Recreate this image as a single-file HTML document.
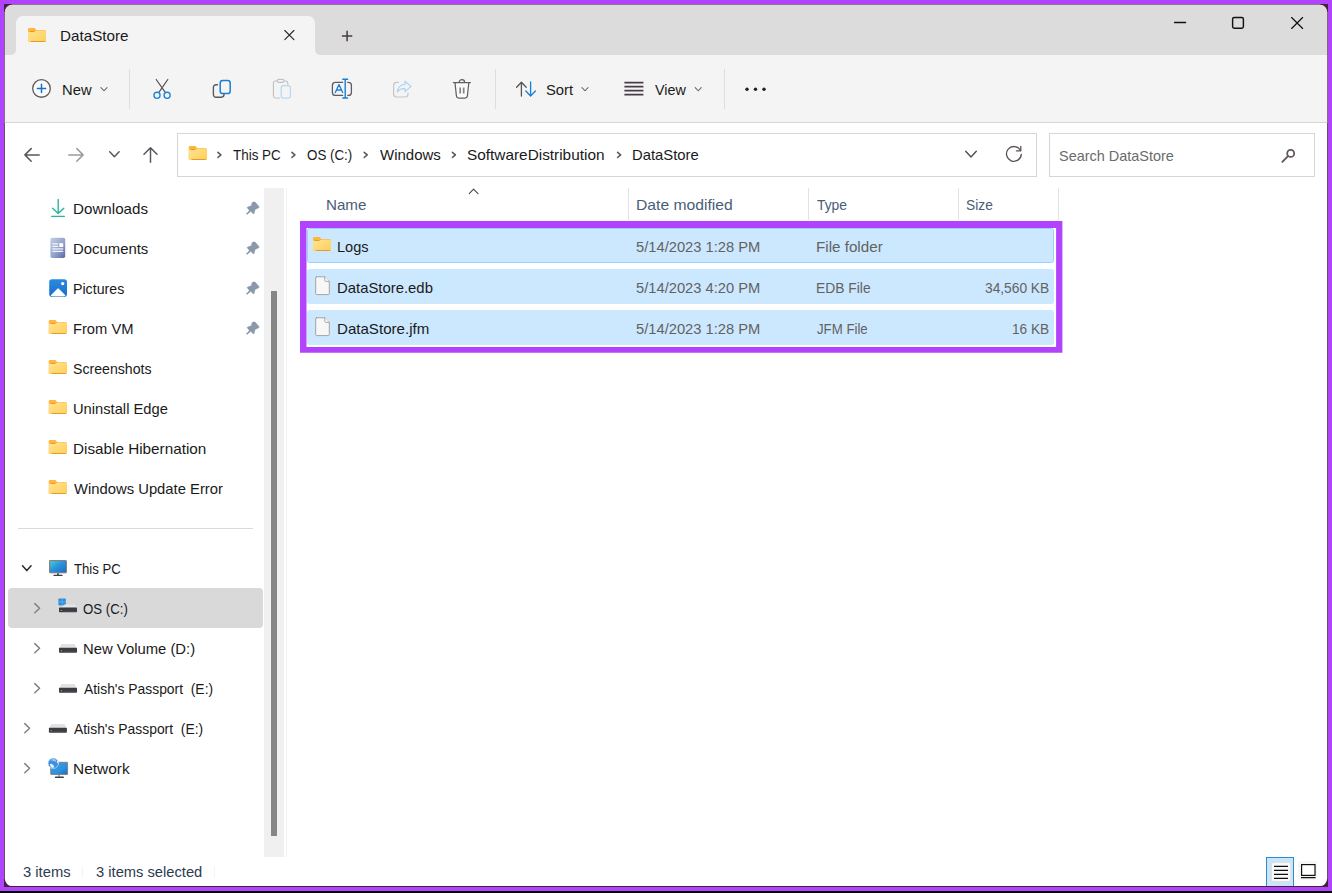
<!DOCTYPE html>
<html lang="en">
<head>
<meta charset="utf-8">
<title>DataStore</title>
<style>
*{box-sizing:border-box;margin:0;padding:0}
html,body{width:1332px;height:893px;overflow:hidden;background:#000}
body{font-family:"Liberation Sans",sans-serif;font-size:15px;color:#1a1a1a;position:relative}
#frame{position:absolute;left:0;top:0;width:1332px;height:891px;background:#b243fc}
#corner{position:absolute;left:4px;top:4px;width:1324px;height:882.8px;background:#45203f}
#ui{position:absolute;left:0;top:0;width:1332px;height:893px;background:#fff;clip-path:inset(4.8px 4.8px 6.9px 4.8px round 7.5px)}
.b{position:absolute}
.t{position:absolute;white-space:pre;line-height:20px;height:20px;font-size:15px;transform-origin:0 0}
svg{position:absolute;overflow:visible}
.vs{position:absolute;width:1px;background:#dedede}
.row{position:absolute;left:306.9px;width:746.9px;height:34.8px;background:#cce8ff;border-radius:2.5px}
</style>
</head>
<body>
<div id="frame"></div>
<div id="corner"></div>
<div id="ui">
<!-- title bar -->
<div class="b" style="left:0;top:0;width:1332px;height:55px;background:#dcdcdc"></div>
<!-- tab -->
<div class="b" style="left:16px;top:15.8px;width:299.4px;height:40px;background:#f4f4f4;border-radius:7px 7px 0 0"></div>
<svg style="left:11px;top:50px" width="5" height="5" viewBox="0 0 8 8"><path d="M8 0V8H0A8 8 0 0 0 8 0Z" fill="#f4f4f4"/></svg>
<svg style="left:315.4px;top:50px" width="5" height="5" viewBox="0 0 8 8"><path d="M0 0V8H8A8 8 0 0 1 0 0Z" fill="#f4f4f4"/></svg>
<!-- toolbar -->
<div class="b" style="left:0;top:55px;width:1332px;height:68px;background:#f4f4f4;border-bottom:1px solid #d6d6d6"></div>
<div class="vs" style="left:129px;top:69px;height:40px"></div>
<div class="vs" style="left:495px;top:69px;height:40px"></div>
<div class="vs" style="left:724px;top:69px;height:40px"></div>
<!-- address bar -->
<div class="b" style="left:177px;top:133px;width:860px;height:44px;border:1px solid #d6d6d6;background:#fff"></div>
<div class="b" style="left:1049px;top:133px;width:266px;height:44px;border:1px solid #d6d6d6;background:#fff"></div>
<!-- sidebar scrollbar -->
<div class="b" style="left:264px;top:188px;width:20px;height:669px;background:#f0f0f0"></div>
<div class="b" style="left:271px;top:291px;width:6px;height:545px;background:#868686"></div>
<div class="b" style="left:286px;top:188px;width:1px;height:669px;background:#f3f3f3"></div>
<!-- sidebar separator + selection -->
<div class="b" style="left:18px;top:528px;width:235px;height:1px;background:#dadada"></div>
<div class="b" style="left:8px;top:588px;width:255px;height:40px;background:#d9d9d9;border-radius:4px"></div>
<!-- list header separators -->
<div class="vs" style="left:628px;top:188px;height:32px;background:#e3e3e3"></div>
<div class="vs" style="left:808px;top:188px;height:32px;background:#e3e3e3"></div>
<div class="vs" style="left:958px;top:188px;height:32px;background:#e3e3e3"></div>
<div class="vs" style="left:1058px;top:188px;height:32px;background:#e3e3e3"></div>
<!-- rows -->
<div class="row" style="top:227.9px;border:1px solid #99d1ff"></div>
<div class="row" style="top:269.1px"></div>
<div class="row" style="top:310.1px"></div>
<!-- purple highlight box -->
<!-- status bar -->
<div class="vs" style="left:82px;top:866px;height:12px;background:#f4f4f4"></div>
<div class="vs" style="left:214px;top:866px;height:12px;background:#f4f4f4"></div>
<div class="b" style="left:1266px;top:857px;width:28px;height:30px;background:#cce4f7;border:1px solid #2a8dd4"></div>
<div class="b" style="left:1298px;top:861px;width:19px;height:19px;background:#f6f6f6;border-radius:2px"></div>
<svg style="left:0;top:0" width="1332" height="893" viewBox="0 0 1332 893" fill="none" stroke-linecap="round" stroke-linejoin="round">
<defs><linearGradient id="gf" x1="0" y1="0" x2="1" y2="1"><stop offset="0" stop-color="#ffe394"/><stop offset="1" stop-color="#ffcf55"/></linearGradient><linearGradient id="gm" x1="0" y1="0" x2="1" y2="1"><stop offset="0" stop-color="#49d3c6"/><stop offset=".45" stop-color="#2b93de"/><stop offset="1" stop-color="#1a6ac4"/></linearGradient><linearGradient id="gd" x1="0" y1="0" x2="1" y2="1"><stop offset="0" stop-color="#c0d0e6"/><stop offset=".55" stop-color="#93a3cc"/><stop offset="1" stop-color="#5867ab"/></linearGradient><linearGradient id="gp" x1="0" y1="0" x2="0" y2="1"><stop offset="0" stop-color="#2a8ae0"/><stop offset="1" stop-color="#1c6fcb"/></linearGradient><linearGradient id="gm2" x1="0" y1="0" x2="1" y2="1"><stop offset="0" stop-color="#3aa0e4"/><stop offset=".6" stop-color="#2e93de"/><stop offset="1" stop-color="#1a69c4"/></linearGradient></defs>
<path fill-rule="evenodd" stroke="none" fill="#b243fc" d="M300 221.1H1062.4V352.8H300ZM306.5 227.9V347.1H1056.1V227.9Z"/>
<g transform="translate(28 28)" stroke="none"><path d="M0 1.1A1.1 1.1 0 0 1 1.1 0H6.7L8.5 2.2H16.9A1.1 1.1 0 0 1 18 3.3V12.9A1.1 1.1 0 0 1 16.9 14H1.1A1.1 1.1 0 0 1 0 12.9Z" fill="#ffb63a"/><path d="M0 4.6A.8.800 0 0 1 .8 3.8H6.2L7.9 2.9H17.2A.8.800 0 0 1 18 3.7V12.9A1.1 1.1 0 0 1 16.9 14H1.1A1.1 1.1 0 0 1 0 12.9Z" fill="url(#gf)"/><rect x="1.8" y="3.1" width="4.6" height=".8" fill="#d9912a"/><rect x="2.6" y="13.1" width="14.4" height=".9" rx=".4" fill="#e39a30"/></g>
<path d="M284.8 30.5L293.9 39.6M293.9 30.5L284.8 39.6" stroke="#2b2b2b" stroke-width="1.15"/>
<path d="M347.1 30.8V41.3M341.9 36H352.3" stroke="#453c46" stroke-width="1.5" stroke-linecap="butt"/>
<path d="M1174.6 22.5H1185.6" stroke="#111" stroke-width="1.4"/>
<rect x="1232.6" y="17.5" width="10.8" height="10.7" rx="1.7" stroke="#111" stroke-width="1.45"/>
<path d="M1291.6 17.5L1302.6 28.5M1302.6 17.5L1291.6 28.5" stroke="#111" stroke-width="1.15"/>
<circle cx="41.5" cy="88.45" r="8.8" fill="#fafafa" stroke="#5a5a5a" stroke-width="1.3"/>
<path d="M37.4 88.4H45.6M41.5 84.3V92.5" stroke="#1474cc" stroke-width="1.5"/>
<path d="M101.0 87.65L104 90.75L107.0 87.65" stroke="#6a6068" stroke-width="1.05"/>
<path d="M156.2 79.5L165.3 92.3M167.8 79.5L158.9 92.3" stroke="#57535c" stroke-width="1.25"/>
<circle cx="157" cy="95.3" r="3.05" stroke="#1f84d8" stroke-width="1.35"/><circle cx="167.1" cy="95.3" r="3.05" stroke="#1f84d8" stroke-width="1.35"/>
<path d="M217.5 84.8H216A2.6 2.6 0 0 0 213.4 87.4V94.6A2.6 2.6 0 0 0 216 97.2H221.4A2.6 2.6 0 0 0 224 94.6V94.2" stroke="#5a5a5a" stroke-width="1.4"/>
<rect x="220.2" y="80.6" width="10" height="13" rx="2.6" stroke="#1a7fd4" stroke-width="1.5"/>
<path d="M279.6 98H275.6A2.2 2.2 0 0 1 273.4 95.800V83.2A2.200 2.200 0 0 1 275.600 81H277.200M284 81H285.600A2.200 2.200 0 0 1 287.800 83.200V84.200" stroke="#c2c2c4" stroke-width="1.15"/>
<rect x="277.2" y="79.4" width="6.8" height="3" rx="1.5" stroke="#c2c2c4" stroke-width="1.1"/>
<rect x="281.2" y="85.600" width="9.200" height="12.600" rx="2.2" stroke="#b3d8f3" stroke-width="1.2"/>
<path d="M342.6 82.400H335.400A3 3 0 0 0 332.400 85.400V92.400A3 3 0 0 0 335.400 95.400H342.600M347.800 82.400H348.400A3 3 0 0 1 351.400 85.400V92.400A3 3 0 0 1 348.400 95.400H347.800" stroke="#5f5a64" stroke-width="1.3"/>
<path d="M345.200 79.300V98M342.800 79.300H347.600M342.800 98H347.600" stroke="#1a7fd4" stroke-width="1.4"/>
<path d="M335.300 92.600L339 84.500L342.700 92.600M336.600 90H341.400" stroke="#1a7fd4" stroke-width="1.3"/>
<path d="M398.400 82.400H396.600A3 3 0 0 0 393.600 85.400V94A3 3 0 0 0 396.600 97H405A3 3 0 0 0 408 94V93.200" stroke="#c6c6c6" stroke-width="1.2"/>
<path d="M405 81.200L411 86.400L405 91.600V88.600C401.500 88.400 399 89.600 397.400 92C397.800 87.600 400.400 84.600 405 84.200Z" stroke="#a9d3f1" stroke-width="1.15"/>
<path d="M455 83L456.400 95.800A2.400 2.400 0 0 0 458.800 98H465A2.400 2.400 0 0 0 467.400 95.800L468.800 83Z" fill="#fafafa" stroke="none"/>
<path d="M453.400 82.500H470.400M459.200 82.300A2.700 2.700 0 0 1 464.600 82.300M455 82.800L456.400 95.800A2.400 2.400 0 0 0 458.800 98H465A2.400 2.400 0 0 0 467.400 95.800L468.800 82.800" stroke="#606064" stroke-width="1.25"/>
<path d="M460.200 87.400V93.400M463.700 87.400V93.400" stroke="#858588" stroke-width="1.7" stroke-linecap="butt"/>
<path d="M521.400 96V82.400M516.600 87.200L521.400 82.200L526.200 87.200" stroke="#555" stroke-width="1.3"/>
<path d="M530.600 82V95.800M525.800 91L530.600 96L535.400 91" stroke="#1a7fd4" stroke-width="1.3"/>
<path d="M582.0 87.65L585 90.75L588.0 87.65" stroke="#6a6068" stroke-width="1.05"/>
<path d="M624.400 82.6H643.400" stroke="#463c46" stroke-width="1.6" stroke-linecap="butt"/>
<path d="M624.400 86.6H643.400" stroke="#463c46" stroke-width="1.6" stroke-linecap="butt"/>
<path d="M624.400 90.6H643.400" stroke="#463c46" stroke-width="1.6" stroke-linecap="butt"/>
<path d="M624.400 94.6H643.400" stroke="#463c46" stroke-width="1.6" stroke-linecap="butt"/>
<path d="M695.2 87.65L698.2 90.75L701.2 87.65" stroke="#6a6068" stroke-width="1.05"/>
<circle cx="747" cy="89.300" r="1.7" fill="#1f1f1f" stroke="none"/>
<circle cx="755.5" cy="89.300" r="1.7" fill="#1f1f1f" stroke="none"/>
<circle cx="764" cy="89.300" r="1.7" fill="#1f1f1f" stroke="none"/>
<path d="M39.200 154.900H25M31.200 148.600L24.900 154.900L31.200 161.200" stroke="#55585c" stroke-width="1.5"/>
<path d="M68.800 154.900H83M76.800 148.600L83.100 154.900L76.800 161.200" stroke="#9b9b9b" stroke-width="1.5"/>
<path d="M109.7 151.7L114.4 156.7L119.10000000000001 151.7" stroke="#55585c" stroke-width="1.5"/>
<path d="M150.500 162.200V147.800M144 154.200L150.500 147.700L157 154.200" stroke="#55585c" stroke-width="1.5"/>
<g transform="translate(188.8 146)" stroke="none"><path d="M0 1.1A1.1 1.1 0 0 1 1.1 0H6.7L8.5 2.2H16.9A1.1 1.1 0 0 1 18 3.3V12.9A1.1 1.1 0 0 1 16.9 14H1.1A1.1 1.1 0 0 1 0 12.9Z" fill="#ffb63a"/><path d="M0 4.6A.8.800 0 0 1 .8 3.8H6.2L7.9 2.9H17.2A.8.800 0 0 1 18 3.7V12.9A1.1 1.1 0 0 1 16.9 14H1.1A1.1 1.1 0 0 1 0 12.9Z" fill="url(#gf)"/><rect x="1.8" y="3.1" width="4.6" height=".8" fill="#d9912a"/><rect x="2.6" y="13.1" width="14.4" height=".9" rx=".4" fill="#e39a30"/></g>
<path d="M217.90 152.30L220.90 154.9L217.90 157.50" stroke="#5a5a5e" stroke-width="1.55"/>
<path d="M291.90 152.30L294.90 154.9L291.90 157.50" stroke="#5a5a5e" stroke-width="1.55"/>
<path d="M364.20 152.30L367.20 154.9L364.20 157.50" stroke="#5a5a5e" stroke-width="1.55"/>
<path d="M452.40 152.30L455.40 154.9L452.40 157.50" stroke="#5a5a5e" stroke-width="1.55"/>
<path d="M617.60 152.30L620.60 154.9L617.60 157.50" stroke="#5a5a5e" stroke-width="1.55"/>
<path d="M965.7 151.29999999999998L971 156.9L976.3 151.29999999999998" stroke="#4e5258" stroke-width="1.45"/>
<path d="M1020.2 150A7.400 7.400 0 1 0 1021.300 154.400" stroke="#5c5058" stroke-width="1.3"/>
<path d="M1020.800 146.400V150.800H1016.400" stroke="#5c5058" stroke-width="1.3"/>
<circle cx="1290.700" cy="153.400" r="3.500" stroke="#65555f" stroke-width="1.800"/><path d="M1288 156.200L1282.400 161.800" stroke="#65555f" stroke-width="1.900"/>
<path d="M58.200 199.400V213.200M52.600 208.200L58.200 213.600L63.800 208.200" stroke="#2bb5a0" stroke-width="1.4"/>
<path d="M51.600 216.300H64.400" stroke="#2bb5a0" stroke-width="1.3"/>
<rect x="50.400" y="237.800" width="14.800" height="20.200" rx="1.800" fill="url(#gd)" stroke="none"/>
<g stroke="none" fill="#fff"><rect x="52.400" y="243.300" width="5.800" height="1.100"/><rect x="52.400" y="245.800" width="5.800" height="1.100"/><rect x="59.300" y="243.200" width="3.900" height="3.800"/><rect x="52.400" y="248.400" width="10.800" height="1.100"/><rect x="52.400" y="250.800" width="10.800" height="1.100"/></g>
<rect x="49.200" y="279.200" width="17.800" height="17.500" rx="2.800" fill="url(#gp)" stroke="none"/>
<circle cx="62.700" cy="283.600" r="1.600" fill="#fff" stroke="none"/>
<path d="M50.600 295.400L57.600 288.600Q58.100 288.200 58.600 288.600L65.600 295.400Q64.600 296.200 63.800 296.200H52.400Q51.400 296.200 50.600 295.400Z" fill="#fff" stroke="none"/>
<g transform="translate(48.8 320)" stroke="none"><path d="M0 1.1A1.1 1.1 0 0 1 1.1 0H6.7L8.5 2.2H16.9A1.1 1.1 0 0 1 18 3.3V12.9A1.1 1.1 0 0 1 16.9 14H1.1A1.1 1.1 0 0 1 0 12.9Z" fill="#ffb63a"/><path d="M0 4.6A.8.800 0 0 1 .8 3.8H6.2L7.9 2.9H17.2A.8.800 0 0 1 18 3.7V12.9A1.1 1.1 0 0 1 16.9 14H1.1A1.1 1.1 0 0 1 0 12.9Z" fill="url(#gf)"/><rect x="1.8" y="3.1" width="4.6" height=".8" fill="#d9912a"/><rect x="2.6" y="13.1" width="14.4" height=".9" rx=".4" fill="#e39a30"/></g>
<g transform="translate(48.8 360)" stroke="none"><path d="M0 1.1A1.1 1.1 0 0 1 1.1 0H6.7L8.5 2.2H16.9A1.1 1.1 0 0 1 18 3.3V12.9A1.1 1.1 0 0 1 16.9 14H1.1A1.1 1.1 0 0 1 0 12.9Z" fill="#ffb63a"/><path d="M0 4.6A.8.800 0 0 1 .8 3.8H6.2L7.9 2.9H17.2A.8.800 0 0 1 18 3.7V12.9A1.1 1.1 0 0 1 16.9 14H1.1A1.1 1.1 0 0 1 0 12.9Z" fill="url(#gf)"/><rect x="1.8" y="3.1" width="4.6" height=".8" fill="#d9912a"/><rect x="2.6" y="13.1" width="14.4" height=".9" rx=".4" fill="#e39a30"/></g>
<g transform="translate(48.8 400)" stroke="none"><path d="M0 1.1A1.1 1.1 0 0 1 1.1 0H6.7L8.5 2.2H16.9A1.1 1.1 0 0 1 18 3.3V12.9A1.1 1.1 0 0 1 16.9 14H1.1A1.1 1.1 0 0 1 0 12.9Z" fill="#ffb63a"/><path d="M0 4.6A.8.800 0 0 1 .8 3.8H6.2L7.9 2.9H17.2A.8.800 0 0 1 18 3.7V12.9A1.1 1.1 0 0 1 16.9 14H1.1A1.1 1.1 0 0 1 0 12.9Z" fill="url(#gf)"/><rect x="1.8" y="3.1" width="4.6" height=".8" fill="#d9912a"/><rect x="2.6" y="13.1" width="14.4" height=".9" rx=".4" fill="#e39a30"/></g>
<g transform="translate(48.8 440)" stroke="none"><path d="M0 1.1A1.1 1.1 0 0 1 1.1 0H6.7L8.5 2.2H16.9A1.1 1.1 0 0 1 18 3.3V12.9A1.1 1.1 0 0 1 16.9 14H1.1A1.1 1.1 0 0 1 0 12.9Z" fill="#ffb63a"/><path d="M0 4.6A.8.800 0 0 1 .8 3.8H6.2L7.9 2.9H17.2A.8.800 0 0 1 18 3.7V12.9A1.1 1.1 0 0 1 16.9 14H1.1A1.1 1.1 0 0 1 0 12.9Z" fill="url(#gf)"/><rect x="1.8" y="3.1" width="4.6" height=".8" fill="#d9912a"/><rect x="2.6" y="13.1" width="14.4" height=".9" rx=".4" fill="#e39a30"/></g>
<g transform="translate(48.8 480)" stroke="none"><path d="M0 1.1A1.1 1.1 0 0 1 1.1 0H6.7L8.5 2.2H16.9A1.1 1.1 0 0 1 18 3.3V12.9A1.1 1.1 0 0 1 16.9 14H1.1A1.1 1.1 0 0 1 0 12.9Z" fill="#ffb63a"/><path d="M0 4.6A.8.800 0 0 1 .8 3.8H6.2L7.9 2.9H17.2A.8.800 0 0 1 18 3.7V12.9A1.1 1.1 0 0 1 16.9 14H1.1A1.1 1.1 0 0 1 0 12.9Z" fill="url(#gf)"/><rect x="1.8" y="3.1" width="4.6" height=".8" fill="#d9912a"/><rect x="2.6" y="13.1" width="14.4" height=".9" rx=".4" fill="#e39a30"/></g>
<polygon transform="translate(246 201)" points="6.9,1.05 9.05,1.05 13.1,5.75 12.8,6.8 9.05,8.4 8,12.7 7.2,12.7 4.75,10.3 1,13.5 0.3,13 3.4,9.5 1.25,6.8 1.25,6.15 5.3,4.7 6.1,2" fill="#8999ab" stroke="#8999ab" stroke-width=".5"/>
<polygon transform="translate(246 241)" points="6.9,1.05 9.05,1.05 13.1,5.75 12.8,6.8 9.05,8.4 8,12.7 7.2,12.7 4.75,10.3 1,13.5 0.3,13 3.4,9.5 1.25,6.8 1.25,6.15 5.3,4.7 6.1,2" fill="#8999ab" stroke="#8999ab" stroke-width=".5"/>
<polygon transform="translate(246 281)" points="6.9,1.05 9.05,1.05 13.1,5.75 12.8,6.8 9.05,8.4 8,12.7 7.2,12.7 4.75,10.3 1,13.5 0.3,13 3.4,9.5 1.25,6.8 1.25,6.15 5.3,4.7 6.1,2" fill="#8999ab" stroke="#8999ab" stroke-width=".5"/>
<polygon transform="translate(246 321)" points="6.9,1.05 9.05,1.05 13.1,5.75 12.8,6.8 9.05,8.4 8,12.7 7.2,12.7 4.75,10.3 1,13.5 0.3,13 3.4,9.5 1.25,6.8 1.25,6.15 5.3,4.7 6.1,2" fill="#8999ab" stroke="#8999ab" stroke-width=".5"/>
<path d="M22.5 565.8000000000001L26.8 570.6L31.1 565.8000000000001" stroke="#2a2a2a" stroke-width="1.5"/>
<rect x="49.600" y="560.600" width="16.800" height="12.200" rx=".5" fill="url(#gm)" stroke="#84767a" stroke-width="1"/>
<rect x="57" y="573.200" width="2" height="1.800" fill="#5a646c" stroke="none"/><rect x="53.400" y="574.800" width="9.200" height="1.300" rx=".6" fill="#36424c" stroke="none"/>
<path d="M34.808 603.6L39.592000000000006 608.2L34.808 612.8000000000001" stroke="#828282" stroke-width="1.5"/>
<rect x="58.400" y="598.400" width="7.400" height="7" rx=".8" fill="#2b8fde" stroke="none"/><path d="M62.100 598.400V605.400M58.400 601.900H65.800" stroke="#79bdf0" stroke-width=".6"/>
<path d="M64.500 604.500H74.800L76.700 607.600H61Z" fill="#e6e6e6" stroke="none"/>
<rect x="59" y="607.400" width="18" height="4.900" rx=".7" fill="#3b3d42" stroke="none"/><rect x="60.600" y="610" width="1.600" height=".9" fill="#9a9a9a" stroke="none"/><rect x="64" y="611" width="11.500" height=".6" fill="#5a4a58" stroke="none"/>
<path d="M34.808 643.6L39.592000000000006 648.2L34.808 652.8000000000001" stroke="#828282" stroke-width="1.5"/>
<g transform="translate(59 644.1)" stroke="none"><path d="M2.4 0H15.600L17.700 3.800H.3Z" fill="#e2e2e2"/><rect x="0" y="3.700" width="18" height="4.900" rx=".8" fill="#3b3d42"/><rect x="1.600" y="6.300" width="1.600" height=".9" fill="#9a9a9a"/><rect x="5" y="7.300" width="11.500" height=".6" fill="#5a4a58"/></g>
<path d="M34.808 683.6L39.592000000000006 688.2L34.808 692.8000000000001" stroke="#828282" stroke-width="1.5"/>
<g transform="translate(59 684.1)" stroke="none"><path d="M2.4 0H15.600L17.700 3.800H.3Z" fill="#e2e2e2"/><rect x="0" y="3.700" width="18" height="4.900" rx=".8" fill="#3b3d42"/><rect x="1.600" y="6.300" width="1.600" height=".9" fill="#9a9a9a"/><rect x="5" y="7.300" width="11.500" height=".6" fill="#5a4a58"/></g>
<path d="M24.808 723.6L29.592 728.2L24.808 732.8000000000001" stroke="#828282" stroke-width="1.5"/>
<g transform="translate(48.9 724.1)" stroke="none"><path d="M2.4 0H15.600L17.700 3.800H.3Z" fill="#e2e2e2"/><rect x="0" y="3.700" width="18" height="4.900" rx=".8" fill="#3b3d42"/><rect x="1.600" y="6.300" width="1.600" height=".9" fill="#9a9a9a"/><rect x="5" y="7.300" width="11.500" height=".6" fill="#5a4a58"/></g>
<path d="M24.808 763.6L29.592 768.2L24.808 772.8000000000001" stroke="#828282" stroke-width="1.5"/>
<rect x="50.700" y="762.300" width="16.900" height="12.200" rx=".5" fill="url(#gm2)" stroke="#8a7c7a" stroke-width=".9"/>
<rect x="58.300" y="774.900" width="1.500" height="1.900" fill="#8a8f94" stroke="none"/><rect x="54.900" y="776.600" width="9" height="1.400" rx=".6" fill="#36424c" stroke="none"/>
<circle cx="53.300" cy="763.300" r="5.200" fill="#3f8fe0" stroke="#cfe2f5" stroke-width=".7"/>
<path d="M49.800 764.200Q51.500 762.800 53.600 765.600Q55 767.400 52.800 767.900Q50.200 767.200 49.800 764.200Z" fill="#e6f1fb" stroke="none"/>
<path d="M50.400 760.200Q52.800 758.400 55.600 759.400Q56.800 761 55.400 761.800Q53 760.200 50.400 760.200Z" fill="#9cc9f3" stroke="none"/>
<circle cx="57.700" cy="762" r="1" fill="#dcebf9" stroke="none"/>
<path d="M469.200 193.600L473.600 189.200L478 193.600" stroke="#4a4a4a" stroke-width="1.15"/>
<g transform="translate(313 237)" stroke="none"><path d="M0 1.1A1.1 1.1 0 0 1 1.1 0H6.7L8.5 2.2H16.9A1.1 1.1 0 0 1 18 3.3V12.9A1.1 1.1 0 0 1 16.9 14H1.1A1.1 1.1 0 0 1 0 12.9Z" fill="#ffb63a"/><path d="M0 4.6A.8.800 0 0 1 .8 3.8H6.2L7.9 2.9H17.2A.8.800 0 0 1 18 3.7V12.9A1.1 1.1 0 0 1 16.9 14H1.1A1.1 1.1 0 0 1 0 12.9Z" fill="url(#gf)"/><rect x="1.8" y="3.1" width="4.6" height=".8" fill="#d9912a"/><rect x="2.6" y="13.1" width="14.4" height=".9" rx=".4" fill="#e39a30"/></g>
<g transform="translate(315.2 276.3)"><path d="M1.2 .5H9.6L14.1 5V17.4A.9.900 0 0 1 13.2 18.3H1.4A.9.900 0 0 1 .5 17.4V1.2A.7.700 0 0 1 1.2 .5Z" fill="#f7f7f7" stroke="#9c9c9c" stroke-width=".9"/><path d="M9.6 .5V4.2A.8.800 0 0 0 10.4 5H14.1" fill="#fdfdfd" stroke="#9c9c9c" stroke-width=".9"/></g>
<g transform="translate(315.2 317.3)"><path d="M1.2 .5H9.6L14.1 5V17.4A.9.900 0 0 1 13.2 18.3H1.4A.9.900 0 0 1 .5 17.4V1.2A.7.700 0 0 1 1.2 .5Z" fill="#f7f7f7" stroke="#9c9c9c" stroke-width=".9"/><path d="M9.6 .5V4.2A.8.800 0 0 0 10.4 5H14.1" fill="#fdfdfd" stroke="#9c9c9c" stroke-width=".9"/></g>
<rect x="1271.4" y="862.4" width="19.4" height="19.2" rx="2.5" fill="#f7f9fb" stroke="#dcdcdc" stroke-width="1" stroke-dasharray="1 1"/>
<path d="M1274 866.4H1288" stroke="#111" stroke-width="1.100" stroke-linecap="butt"/>
<path d="M1274 870.4H1288" stroke="#111" stroke-width="1.100" stroke-linecap="butt"/>
<path d="M1274 874.4H1288" stroke="#111" stroke-width="1.100" stroke-linecap="butt"/>
<path d="M1274 878.4H1288" stroke="#111" stroke-width="1.100" stroke-linecap="butt"/>
<rect x="1301.600" y="864.600" width="13.400" height="10.800" fill="#fff" stroke="#111" stroke-width="1.200" stroke-linejoin="miter"/><path d="M1301 877.600H1315.600" stroke="#111" stroke-width="1.100" stroke-linecap="butt"/>
</svg>
<div class="t" style="left:60.32px;top:25.6px;color:#1a1a1a;transform:scaleX(1.0146)">DataStore</div>
<div class="t" style="left:62.16px;top:79.6px;color:#1a1a1a;transform:scaleX(0.9867)">New</div>
<div class="t" style="left:546.43px;top:79.6px;color:#1a1a1a;transform:scaleX(0.9849)">Sort</div>
<div class="t" style="left:654.91px;top:79.6px;color:#1a1a1a;transform:scaleX(0.9575)">View</div>
<div class="t" style="left:233.48px;top:145.3px;color:#1a1a1a;transform:scaleX(0.8953)">This PC</div>
<div class="t" style="left:307.28px;top:145.3px;color:#1a1a1a;transform:scaleX(0.8902)">OS (C:)</div>
<div class="t" style="left:379.54px;top:145.3px;color:#1a1a1a;transform:scaleX(0.9987)">Windows</div>
<div class="t" style="left:467.00px;top:145.3px;color:#1a1a1a;transform:scaleX(1.0243)">SoftwareDistribution</div>
<div class="t" style="left:631.70px;top:145.3px;color:#1a1a1a;transform:scaleX(0.9885)">DataStore</div>
<div class="t" style="left:1058.91px;top:145.8px;color:#6b6b6b;transform:scaleX(0.9637)">Search DataStore</div>
<div class="t" style="left:73.04px;top:198.8px;color:#1a1a1a;transform:scaleX(1.0109)">Downloads</div>
<div class="t" style="left:73.42px;top:238.8px;color:#1a1a1a;transform:scaleX(0.9925)">Documents</div>
<div class="t" style="left:73.11px;top:278.8px;color:#1a1a1a;transform:scaleX(0.9457)">Pictures</div>
<div class="t" style="left:73.08px;top:318.8px;color:#1a1a1a;transform:scaleX(0.9800)">From VM</div>
<div class="t" style="left:73.13px;top:358.8px;color:#1a1a1a;transform:scaleX(0.9414)">Screenshots</div>
<div class="t" style="left:73.48px;top:398.8px;color:#1a1a1a;transform:scaleX(0.9804)">Uninstall Edge</div>
<div class="t" style="left:73.15px;top:438.8px;color:#1a1a1a;transform:scaleX(1.0181)">Disable Hibernation</div>
<div class="t" style="left:74.16px;top:478.8px;color:#1a1a1a;transform:scaleX(0.9873)">Windows Update Error</div>
<div class="t" style="left:74.15px;top:558.8px;color:#1a1a1a;transform:scaleX(0.8772)">This PC</div>
<div class="t" style="left:83.25px;top:598.8px;color:#1a1a1a;transform:scaleX(0.8822)">OS (C:)</div>
<div class="t" style="left:83.16px;top:638.8px;color:#1a1a1a;transform:scaleX(0.9892)">New Volume (D:)</div>
<div class="t" style="left:83.67px;top:678.8px;color:#1a1a1a;transform:scaleX(0.9250)">Atish's Passport  (E:)</div>
<div class="t" style="left:74.34px;top:718.8px;color:#1a1a1a;transform:scaleX(0.9253)">Atish's Passport  (E:)</div>
<div class="t" style="left:73.13px;top:758.8px;color:#1a1a1a;transform:scaleX(1.0304)">Network</div>
<div class="t" style="left:326.03px;top:194.8px;color:#4a5d78;transform:scaleX(1.0094)">Name</div>
<div class="t" style="left:636.10px;top:194.8px;color:#4a5d78;transform:scaleX(1.0451)">Date modified</div>
<div class="t" style="left:817.11px;top:194.8px;color:#4a5d78;transform:scaleX(0.9232)">Type</div>
<div class="t" style="left:966.49px;top:194.8px;color:#4a5d78;transform:scaleX(0.9182)">Size</div>
<div class="t" style="left:337.42px;top:236.7px;color:#1a1a1a;transform:scaleX(0.9716)">Logs</div>
<div class="t" style="left:337.06px;top:277.8px;color:#1a1a1a;transform:scaleX(0.9915)">DataStore.edb</div>
<div class="t" style="left:337.13px;top:318.9px;color:#1a1a1a;transform:scaleX(1.0059)">DataStore.jfm</div>
<div class="t" style="left:636.16px;top:236.7px;color:#626262;transform:scaleX(0.9806)">5/14/2023 1:28 PM</div>
<div class="t" style="left:636.16px;top:277.8px;color:#626262;transform:scaleX(0.9806)">5/14/2023 4:20 PM</div>
<div class="t" style="left:636.16px;top:318.9px;color:#626262;transform:scaleX(0.9806)">5/14/2023 1:28 PM</div>
<div class="t" style="left:816.04px;top:236.7px;color:#626262;transform:scaleX(1.0128)">File folder</div>
<div class="t" style="left:816.14px;top:277.8px;color:#626262;transform:scaleX(0.9221)">EDB File</div>
<div class="t" style="left:816.79px;top:318.9px;color:#626262;transform:scaleX(0.8822)">JFM File</div>
<div class="t" style="left:984.84px;top:277.8px;color:#626262;transform:scaleX(0.9165)">34,560 KB</div>
<div class="t" style="left:1011.62px;top:318.9px;color:#626262;transform:scaleX(0.9097)">16 KB</div>
<div class="t" style="left:22.98px;top:861.8px;color:#2c3a52;transform:scaleX(0.9834)">3 items</div>
<div class="t" style="left:96.06px;top:861.8px;color:#2c3a52;transform:scaleX(0.9808)">3 items selected</div>
</div>
</body>
</html>
